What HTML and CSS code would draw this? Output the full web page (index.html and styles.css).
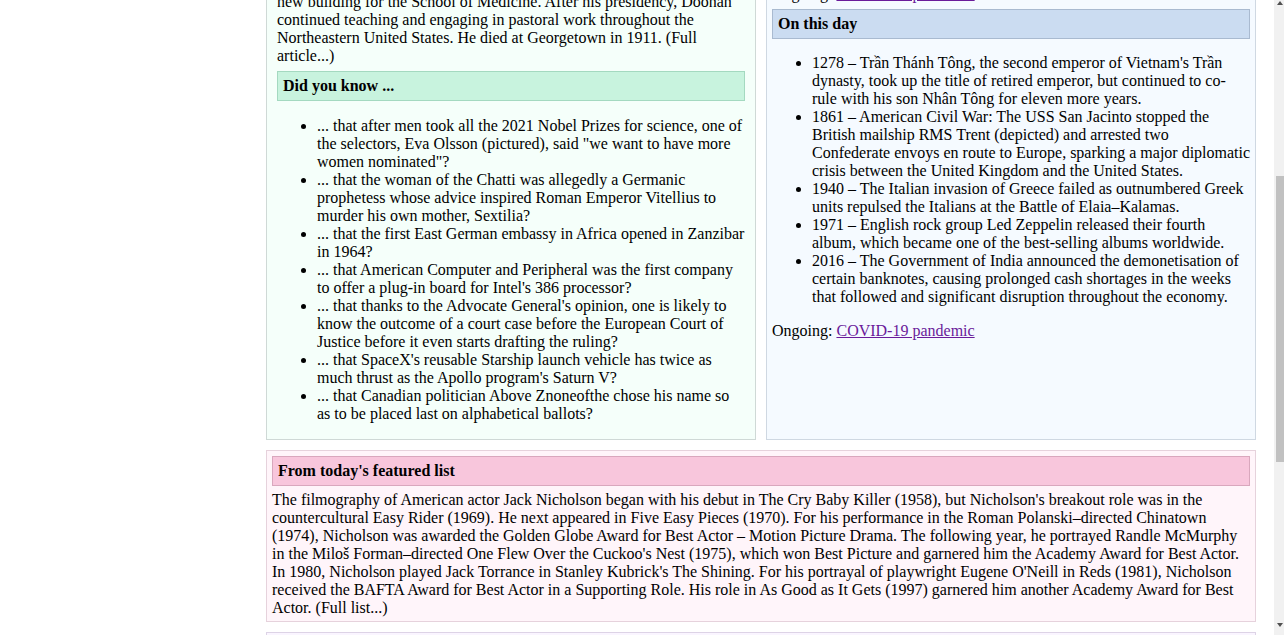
FILE: index.html
```html
<!DOCTYPE html>
<html lang="en">
<head>
<meta charset="utf-8">
<title>Main Page</title>
<link rel="stylesheet" href="styles.css">
</head>
<body>
<div class="window">
<div class="viewport" id="viewport">
<div class="page">
  <nav class="sidebar">
    <div class="logo">Wikipedia</div>
    <div class="tagline">The Free Encyclopedia</div>
  </nav>
  <main class="main">
    <div class="banner">
      <div class="welcome">Welcome to <a class="link" href="#">Wikipedia</a>,</div>
      <div class="welcome-sub">the free encyclopedia that anyone can edit.</div>
      <div class="welcome-count">6,389,412 articles in English</div>
    </div>
    <div class="columns">
      <section class="box box-left">
        <h2 class="hd hd-green">From today's featured article</h2>
        <p class="para">James A. Doonan (1841–1911) was an American Catholic priest and Jesuit who served as the president of Georgetown University from 1882 to 1888. Born in Philadelphia, he studied at Gonzaga College in Washington, D.C., before entering the Society of Jesus in 1860. He taught at several Jesuit schools, including Boston College, the College of the Holy Cross, and Loyola College in Maryland, and was ordained a priest in 1873. He later became the vice president of Georgetown and succeeded Patrick F. Healy as president. During his tenure, the university's law school grew considerably, and Doonan oversaw the decoration of the interiors of Healy Hall and the completion of the Coleman Museum. He also established a new hospital affiliated with the university and, with the help of generous donors, secured the land for a new building for the School of Medicine. After his presidency, Doonan continued teaching and engaging in pastoral work throughout the Northeastern United States. He died at Georgetown in 1911. (Full article...)</p>
        <h2 class="hd hd-green" id="dyk">Did you know ...</h2>
        <ul class="list list-dyk">
          <li>... that after men took all the 2021 Nobel Prizes for science, one of the selectors, Eva Olsson (pictured), said "we want to have more women nominated"?</li>
          <li>... that the woman of the Chatti was allegedly a Germanic prophetess whose advice inspired Roman Emperor Vitellius to murder his own mother, Sextilia?</li>
          <li>... that the first East German embassy in Africa opened in Zanzibar in 1964?</li>
          <li>... that American Computer and Peripheral was the first company to offer a plug-in board for Intel's 386 processor?</li>
          <li>... that thanks to the Advocate General's opinion, one is likely to know the outcome of a court case before the European Court of Justice before it even starts drafting the ruling?</li>
          <li>... that SpaceX's reusable Starship launch vehicle has twice as much thrust as the Apollo program's Saturn V?</li>
          <li>... that Canadian politician Above Znoneofthe chose his name so as to be placed last on alphabetical ballots?</li>
        </ul>
      </section>
      <section class="box box-right">
        <h2 class="hd hd-blue">In the news</h2>
        <ul class="list list-news">
          <li>Typhoon Goni strikes the Philippines, killing at least 25 people and leaving hundreds of thousands of residents displaced.</li>
          <li>In the United States presidential election, Joe Biden is elected president and Kamala Harris is elected vice president.</li>
          <li>A gunman kills four people in a terrorist attack in Vienna, Austria, before being shot dead by police officers.</li>
          <li>Hurricane Eta makes landfall in Nicaragua as a Category 4 hurricane, causing widespread flooding across Central America.</li>
          <li>The Atlantic hurricane season sets a record with 29 storms.</li>
          <li>In motor racing, Lewis Hamilton wins the Turkish Grand Prix and his seventh World Drivers' Championship.</li>
        </ul>
        <p class="para-plain">Ongoing: <a class="link" href="#">COVID-19 pandemic</a></p>
        <h2 class="hd hd-blue">On this day</h2>
        <ul class="list list-otd">
          <li>1278 – Trần Thánh Tông, the second emperor of Vietnam's Trần dynasty, took up the title of retired emperor, but continued to co-rule with his son Nhân Tông for eleven more years.</li>
          <li class="otd-wide">1861 – American Civil War: The USS San Jacinto stopped the British mailship RMS Trent (depicted) and arrested two Confederate envoys en route to Europe, sparking a major diplomatic crisis between the United Kingdom and the United States.</li>
          <li>1940 – The Italian invasion of Greece failed as outnumbered Greek units repulsed the Italians at the Battle of Elaia–Kalamas.</li>
          <li>1971 – English rock group Led Zeppelin released their fourth album, which became one of the best-selling albums worldwide.</li>
          <li>2016 – The Government of India announced the demonetisation of certain banknotes, causing prolonged cash shortages in the weeks that followed and significant disruption throughout the economy.</li>
        </ul>
        <p class="para-plain">Ongoing: <a class="link" href="#">COVID-19 pandemic</a></p>
      </section>
    </div>
    <section class="box box-lower">
      <h2 class="hd hd-pink">From today's featured list</h2>
      <p class="para-lower">The filmography of American actor Jack Nicholson began with his debut in The Cry Baby Killer (1958), but Nicholson's breakout role was in the countercultural Easy Rider (1969). He next appeared in Five Easy Pieces (1970). For his performance in the Roman Polanski–directed Chinatown (1974), Nicholson was awarded the Golden Globe Award for Best Actor – Motion Picture Drama. The following year, he portrayed Randle McMurphy in the Miloš Forman–directed One Flew Over the Cuckoo's Nest (1975), which won Best Picture and garnered him the Academy Award for Best Actor. In 1980, Nicholson played Jack Torrance in Stanley Kubrick's The Shining. For his portrayal of playwright Eugene O'Neill in Reds (1981), Nicholson received the BAFTA Award for Best Actor in a Supporting Role. His role in As Good as It Gets (1997) garnered him another Academy Award for Best Actor. (Full list...)</p>
    </section>
    <section class="box box-picture">
      <h2 class="hd hd-purple">Today's featured picture</h2>
      <p class="para-lower">The Rosetta Stone is a granodiorite stele inscribed with three versions of a decree issued in Memphis, Egypt, in 196 BC during the Ptolemaic dynasty on behalf of King Ptolemy V Epiphanes. The top and middle texts are in Ancient Egyptian using hieroglyphic and Demotic scripts respectively, while the bottom is in Ancient Greek. The decree has only minor differences between the three versions, making the Rosetta Stone key to deciphering the Egyptian scripts.</p>
      <p class="para-lower">Photograph credit: Hans Hillewaert</p>
      <div class="pic-space"></div>
    </section>
  </main>
</div>
</div>
<div class="scrollbar" aria-hidden="true">
  <div class="sb-arrow sb-up"></div>
  <div class="sb-thumb"></div>
  <div class="sb-fill"></div>
  <div class="sb-arrow sb-down"></div>
</div>
</div>
<script src="script.js"></script>
</body>
</html>
```

FILE: styles.css
```css
html, body {
  margin: 0;
  padding: 0;
  height: 100%;
  overflow: hidden;
}
body {
  font-family: "Liberation Serif", "Times New Roman", serif;
  font-size: 16px;
  line-height: 18px;
  color: #000;
  background: #fff;
}
.window {
  display: flex;
  height: 100vh;
}
.viewport {
  flex: 1;
  min-width: 0;
  height: 100vh;
  overflow-y: auto;
  scrollbar-width: none;
}
.viewport::-webkit-scrollbar {
  display: none;
}
.scrollbar {
  width: 10px;
  flex: none;
  display: flex;
  flex-direction: column;
  background: #f1f1f1;
  padding: 1px 0 8px;
  box-sizing: border-box;
}
.sb-arrow {
  width: 0;
  height: 0;
  margin-left: 3px;
  border-left: 3px solid transparent;
  border-right: 3px solid transparent;
}
.sb-up {
  border-bottom: 4px solid #505050;
}
.sb-down {
  border-top: 4px solid #505050;
}
.sb-thumb {
  margin: 171px 0 0 2px;
  height: 286px;
  background: #c1c1c1;
}
.sb-fill {
  flex: 1;
}
.page {
  display: flex;
  align-items: flex-start;
}
.sidebar {
  width: 266px;
  flex: none;
  padding-top: 20px;
  text-align: center;
}
.logo {
  font-size: 22px;
  line-height: 26px;
}
.tagline {
  font-size: 12px;
}
.main {
  width: 990px;
  flex: none;
  padding-bottom: 25px;
}
.banner {
  height: 97px;
  margin-bottom: 10px;
  padding: 16px 10px 0;
  box-sizing: border-box;
  border: 1px solid #ddd;
  background: #f8f9fa;
  text-align: center;
}
.welcome {
  font-size: 28px;
  line-height: 32px;
}
.welcome-sub {
  font-size: 14px;
}
.welcome-count {
  font-size: 14px;
}
.columns {
  display: grid;
  grid-template-columns: 490px 490px;
  column-gap: 10px;
}
.box {
  border: 1px solid;
}
.box-left {
  background: #f5fffa;
  border-color: #cfd9d6;
  padding: 10px;
}
.box-right {
  background: #f5faff;
  border-color: #cfd8e2;
  padding: 5px;
}
.box-lower {
  margin-top: 10px;
  background: #fff5fa;
  border-color: #e6d2dc;
  padding: 5px 5px 4px;
}
.box-picture {
  margin-top: 10px;
  background: #faf5ff;
  border-color: #ddd3e6;
  padding: 5px;
}
.hd {
  margin: 6px 0 0;
  padding: 4px 5px;
  border: 1px solid;
  font-size: 16px;
  line-height: 20px;
  font-weight: bold;
}
.hd:first-child {
  margin-top: 0;
}
.hd-green {
  background: #c8f3de;
  border-color: #a4d9c0;
}
.hd-blue {
  background: #cbdcf1;
  border-color: #a9bad0;
}
.hd-pink {
  background: #f8c6dc;
  border-color: #d9a7bd;
}
.hd-purple {
  background: #ddcef2;
  border-color: #afa3bf;
}
.para {
  margin: 15px 0 0;
}
.para-plain {
  margin: 16px 0 0;
}
.para-lower {
  margin: 5px 0 0;
}
.list {
  margin: 15px 0 0;
  padding-left: 40px;
}
.list-dyk {
  margin: 16px 0 6px;
}
.list-news {
  margin-top: 14px;
}
.otd-wide {
  margin-right: -1px;
}
.link {
  color: #6a1b9a;
  text-decoration: underline;
}
.pic-space {
  height: 200px;
}
```

FILE: script.js
```js
(function () {
  function align() {
    var v = document.getElementById('viewport');
    var h = document.getElementById('dyk');
    if (!v || !h) return;
    var top = h.getBoundingClientRect().top - v.getBoundingClientRect().top + v.scrollTop;
    v.scrollTop = top - 71;
  }
  align();
  window.addEventListener('load', align);
})();
```
